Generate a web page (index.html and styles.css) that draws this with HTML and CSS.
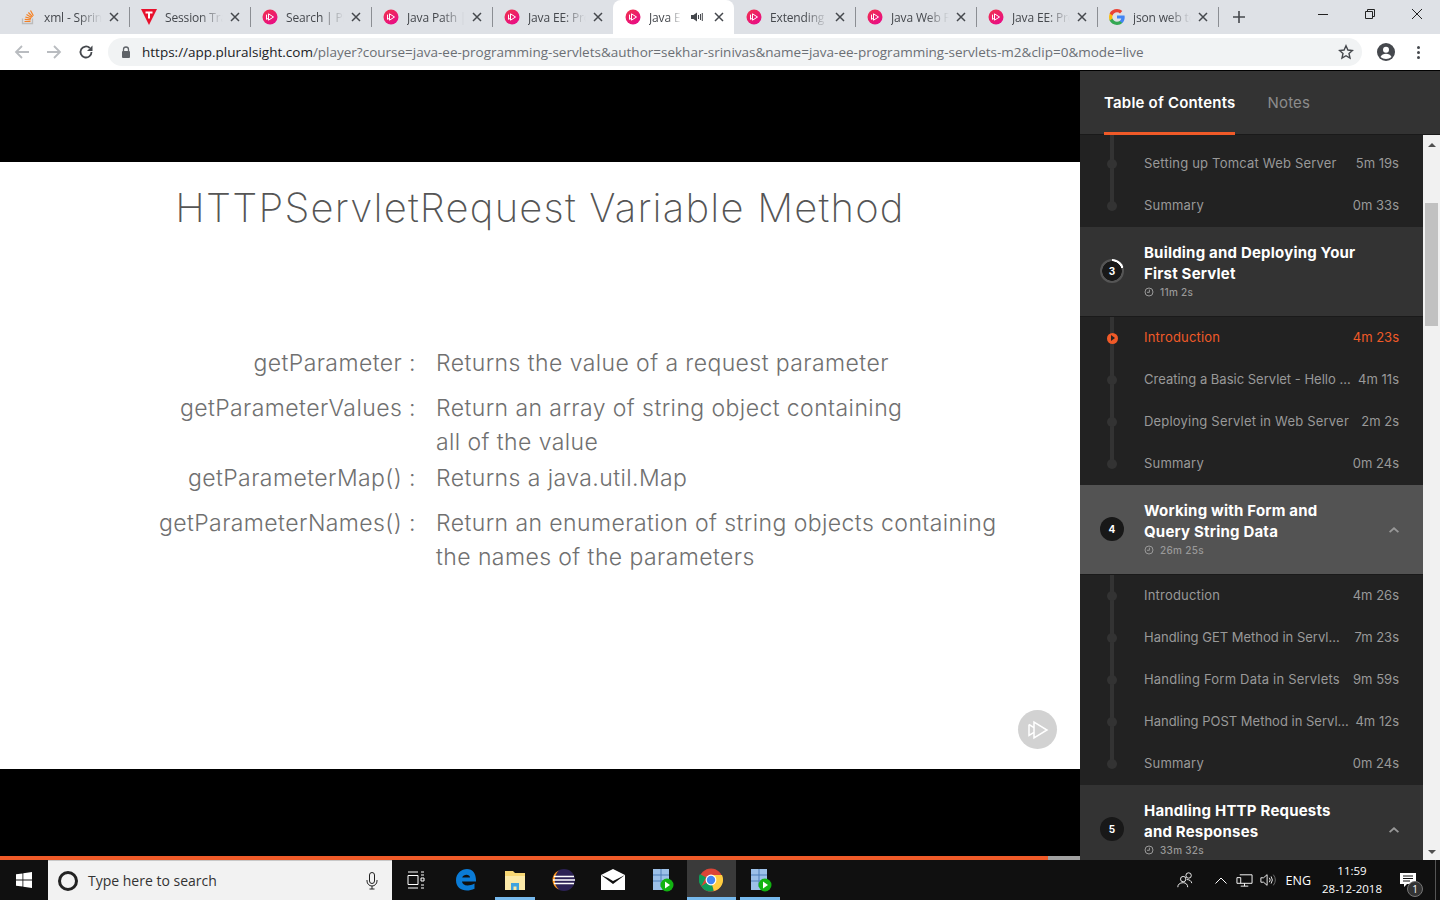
FILE: index.html
```html
<!DOCTYPE html>
<html lang="en">
<head>
    <meta charset="UTF-8">
    <meta name="viewport" content="width=device-width, initial-scale=1.0">
    <title>Java EE: Programming Servlets</title>
    <link rel="stylesheet" href="styles.css">
</head>
<body>

<svg class="defs" width="0" height="0">
    <defs>
        <linearGradient id="psGrad" x1="0.2" y1="0" x2="0.8" y2="1">
            <stop offset="0" stop-color="#f0304f"/>
            <stop offset="1" stop-color="#e80a89"/>
        </linearGradient>
        <symbol id="ps" viewBox="0 0 16 16">
            <circle cx="8" cy="8" r="7.500" fill="url(#psGrad)"/>
            <path d="M6.500 4.800v6.400l5-3.200z" fill="none" stroke="#fff" stroke-width="1"/>
            <path d="M4.500 5.600v4.800l1.600-1" fill="none" stroke="#fff" stroke-width="1"/>
        </symbol>
        <symbol id="close" viewBox="0 0 10 10">
            <path d="M1 1l8 8M9 1l-8 8" stroke="#45484d" stroke-width="1.500" fill="none"/>
        </symbol>
        <symbol id="clock" viewBox="0 0 10 10">
            <circle cx="5" cy="5" r="4" fill="none" stroke="currentColor" stroke-width="1"/>
            <path d="M5.400 2.600v2.700H3" fill="none" stroke="currentColor" stroke-width="1"/>
        </symbol>
        <symbol id="chev" viewBox="0 0 10 6">
            <path d="M5 0l5 4.400-1.200 1.400L5 2.600 1.200 5.800 0 4.400z" fill="currentColor"/>
        </symbol>
        <symbol id="appgrid" viewBox="0 0 24 24">
            <rect x="3" y="1" width="16" height="21" fill="#9cc0e8"/>
            <path d="M3 7h16M3 13h16M11 1v18" stroke="#4f7fb8" stroke-width="1"/>
            <circle cx="17" cy="17" r="6.500" fill="#12b312"/>
            <path d="M15 13.500v7l5-3.500z" fill="#fff"/>
        </symbol>
    </defs>
</svg>

<!-- browser tabs -->
<div class="tabstrip">
    <div class="tab">
        <svg class="tab-icon" viewBox="0 0 16 16"><path d="M2.500 9.500v5h10v-5" fill="none" stroke="#bcbbbb" stroke-width="1.300"/><path d="M4.500 12.500h6M4.700 10.300l6 .6M5.300 8l5.800 1.600M6.500 5.600l5.200 3M8.400 3.500l4.200 4.300M10.500 1.500l2.900 5.300" stroke="#f48024" stroke-width="1.200" fill="none"/></svg>
        <span class="tab-title">xml - Spring</span>
        <svg class="tab-close"><use href="#close"/></svg>
    </div>
    <div class="tab">
        <svg class="tab-icon" viewBox="0 0 16 16"><path d="M0 0h16L8 16z" fill="#e8112d"/><path d="M4.500 2.500h7v2H9v5H7v-5H4.500z" fill="#fff"/></svg>
        <span class="tab-title">Session Tracking</span>
        <svg class="tab-close"><use href="#close"/></svg>
    </div>
    <div class="tab">
        <svg class="tab-icon"><use href="#ps"/></svg>
        <span class="tab-title">Search | Pluralsight</span>
        <svg class="tab-close"><use href="#close"/></svg>
    </div>
    <div class="tab">
        <svg class="tab-icon"><use href="#ps"/></svg>
        <span class="tab-title">Java Path | Pluralsight</span>
        <svg class="tab-close"><use href="#close"/></svg>
    </div>
    <div class="tab no-sep">
        <svg class="tab-icon"><use href="#ps"/></svg>
        <span class="tab-title">Java EE: Programming</span>
        <svg class="tab-close"><use href="#close"/></svg>
    </div>
    <div class="tab active no-sep">
        <svg class="tab-icon"><use href="#ps"/></svg>
        <span class="tab-title short">Java EE: Programming</span>
        <svg class="tab-mute" viewBox="0 0 12 10"><path d="M0 3h2.500L6 .5v9L2.500 7H0z" fill="#45484d"/><path d="M7.500 3v4M9.500 2v6M11.300 1v8" stroke="#45484d" stroke-width="1" fill="none"/></svg>
        <svg class="tab-close"><use href="#close"/></svg>
    </div>
    <div class="tab">
        <svg class="tab-icon"><use href="#ps"/></svg>
        <span class="tab-title">Extending and Using</span>
        <svg class="tab-close"><use href="#close"/></svg>
    </div>
    <div class="tab">
        <svg class="tab-icon"><use href="#ps"/></svg>
        <span class="tab-title">Java Web Fundamentals</span>
        <svg class="tab-close"><use href="#close"/></svg>
    </div>
    <div class="tab">
        <svg class="tab-icon"><use href="#ps"/></svg>
        <span class="tab-title">Java EE: Programming</span>
        <svg class="tab-close"><use href="#close"/></svg>
    </div>
    <div class="tab">
        <svg class="tab-icon" viewBox="0 0 16 16"><path d="M15.700 8.200c0-.6-.1-1.100-.2-1.600H8v3h4.300c-.2 1-.7 1.800-1.600 2.400v2h2.600c1.500-1.400 2.400-3.400 2.400-5.800z" fill="#4285f4"/><path d="M8 16c2.200 0 4-.7 5.300-2l-2.600-2c-.7.500-1.600.8-2.700.8-2.100 0-3.900-1.400-4.500-3.300H.6v2.100C1.900 14.200 4.700 16 8 16z" fill="#34a853"/><path d="M3.500 9.500c-.3-1-.3-2 0-3V4.400H.8c-1 2.200-1 5 0 7.200z" fill="#fbbc05"/><path d="M8 3.200c1.200 0 2.200.4 3 1.200l2.300-2.300C11.900.8 10.100 0 8 0 4.700 0 1.900 1.800.6 4.400l2.900 2.100C4.100 4.600 5.900 3.200 8 3.200z" fill="#ea4335"/></svg>
        <span class="tab-title">json web token</span>
        <svg class="tab-close"><use href="#close"/></svg>
    </div>
    <svg class="new-tab" viewBox="0 0 14 14"><path d="M7 1v12M1 7h12" stroke="#45484d" stroke-width="1.600" fill="none"/></svg>
    <div class="window-btns">
        <svg viewBox="0 0 12 12"><path d="M1 6.500h10" stroke="#222" stroke-width="1" fill="none"/></svg>
        <svg viewBox="0 0 12 12"><path d="M1.500 3.500h7v7h-7zM3.500 3.500v-2h7v7h-2" stroke="#222" stroke-width="1" fill="none"/></svg>
        <svg viewBox="0 0 12 12"><path d="M1 1l10 10M11 1L1 11" stroke="#222" stroke-width="1" fill="none"/></svg>
    </div>
</div>

<!-- address bar -->
<div class="toolbar">
    <svg class="nav-icon" viewBox="0 0 16 16"><path d="M15 8H2M8 2L2 8l6 6" stroke="#b9bcc0" stroke-width="1.800" fill="none"/></svg>
    <svg class="nav-icon" viewBox="0 0 16 16"><path d="M1 8h13M8 2l6 6-6 6" stroke="#b9bcc0" stroke-width="1.800" fill="none"/></svg>
    <svg class="nav-icon" viewBox="0 0 16 16"><path d="M13.500 8A5.500 5.500 0 1 1 11.800 4" stroke="#45484d" stroke-width="1.800" fill="none"/><path d="M14.500 1.500v5.500H9z" fill="#45484d"/></svg>
    <div class="omnibox">
        <svg class="lock" viewBox="0 0 10 13"><path d="M2.500 5.500V3.500a2.500 2.500 0 0 1 5 0v2" stroke="#5f6368" stroke-width="1.300" fill="none"/><rect x="1" y="5" width="8" height="7" rx="1" fill="#5f6368"/></svg>
        <span class="url"><span class="url-host">https://app.pluralsight.com</span>/player?course=java-ee-programming-servlets&amp;author=sekhar-srinivas&amp;name=java-ee-programming-servlets-m2&amp;clip=0&amp;mode=live</span>
        <svg class="star" viewBox="0 0 16 16"><path d="M8 1.800l1.900 4.200 4.500.5-3.400 3 1 4.500L8 11.700 4 14l1-4.500-3.400-3 4.500-.5z" fill="none" stroke="#45484d" stroke-width="1.400"/></svg>
    </div>
    <svg class="avatar" viewBox="0 0 18 18"><circle cx="9" cy="9" r="9" fill="#45484d"/><circle cx="9" cy="6.800" r="3" fill="#fff"/><path d="M3.500 14c1-2.500 3-3.200 5.500-3.200s4.500.7 5.500 3.200c-3 2.600-8 2.600-11 0z" fill="#fff"/></svg>
    <div class="kebab"><i></i><i></i><i></i></div>
</div>

<div class="app">
    <!-- video area -->
    <div class="player">
        <div class="video">
            <div class="slide">
                <h1 class="slide-title">HTTPServletRequest Variable Method</h1>
                <dl class="defs-list">
                    <dt>getParameter :</dt>
                    <dd>Returns the value of a request parameter</dd>
                    <dt class="wide-top">getParameterValues :</dt>
                    <dd class="wide-top">Return an array of string object containing<br>all of the value</dd>
                    <dt class="thin-top">getParameterMap() :</dt>
                    <dd class="thin-top">Returns a java.util.Map</dd>
                    <dt class="wide-top">getParameterNames() :</dt>
                    <dd class="wide-top">Return an enumeration of string objects containing<br>the names of the parameters</dd>
                </dl>
                <div class="watermark">
                    <svg viewBox="0 0 24 24"><path d="M8 4v16l13-8z" fill="none" stroke="#fff" stroke-width="1.500"/><path d="M3 6.500v11l5-3.200" fill="none" stroke="#fff" stroke-width="1.500"/><path d="M3 6.500L8 9.600" fill="none" stroke="#fff" stroke-width="1.500"/></svg>
                </div>
            </div>
        </div>
        <div class="progress"><div class="progress-fill"></div></div>
    </div>

    <!-- table of contents -->
    <div class="sidebar">
        <div class="side-tabs">
            <div class="side-tab current">Table of Contents</div>
            <div class="side-tab">Notes</div>
        </div>
        <div class="side-body">
            <div class="toc">
                <div class="clips first">
                    <div class="clip"><div class="track"><i></i></div><span class="clip-name">Setting up Tomcat Web Server</span><span class="clip-time">5m 19s</span></div>
                    <div class="clip"><div class="track"><i></i></div><span class="clip-name">Summary</span><span class="clip-time">0m 33s</span></div>
                </div>

                <div class="module">
                    <div class="badge progress-ring">3</div>
                    <div class="module-text">
                        <div class="module-title">Building and Deploying Your First Servlet</div>
                        <div class="module-time"><svg><use href="#clock"/></svg>11m 2s</div>
                    </div>
                </div>
                <div class="clips">
                    <div class="clip playing"><div class="track"><i></i></div><span class="clip-name">Introduction</span><span class="clip-time">4m 23s</span></div>
                    <div class="clip"><div class="track"><i></i></div><span class="clip-name tight">Creating a Basic Servlet - Hello ...</span><span class="clip-time">4m 11s</span></div>
                    <div class="clip"><div class="track"><i></i></div><span class="clip-name">Deploying Servlet in Web Server</span><span class="clip-time">2m 2s</span></div>
                    <div class="clip"><div class="track"><i></i></div><span class="clip-name">Summary</span><span class="clip-time">0m 24s</span></div>
                </div>

                <div class="module lit">
                    <div class="badge">4</div>
                    <div class="module-text">
                        <div class="module-title">Working with Form and Query String Data</div>
                        <div class="module-time"><svg><use href="#clock"/></svg>26m 25s</div>
                    </div>
                    <svg class="chev"><use href="#chev"/></svg>
                </div>
                <div class="clips">
                    <div class="clip"><div class="track"><i></i></div><span class="clip-name">Introduction</span><span class="clip-time">4m 26s</span></div>
                    <div class="clip"><div class="track"><i></i></div><span class="clip-name tight">Handling GET Method in Servl...</span><span class="clip-time">7m 23s</span></div>
                    <div class="clip"><div class="track"><i></i></div><span class="clip-name">Handling Form Data in Servlets</span><span class="clip-time">9m 59s</span></div>
                    <div class="clip"><div class="track"><i></i></div><span class="clip-name tight">Handling POST Method in Servl...</span><span class="clip-time">4m 12s</span></div>
                    <div class="clip"><div class="track"><i></i></div><span class="clip-name">Summary</span><span class="clip-time">0m 24s</span></div>
                </div>

                <div class="module">
                    <div class="badge">5</div>
                    <div class="module-text">
                        <div class="module-title">Handling HTTP Requests and Responses</div>
                        <div class="module-time"><svg><use href="#clock"/></svg>33m 32s</div>
                    </div>
                    <svg class="chev"><use href="#chev"/></svg>
                </div>
            </div>
            <div class="scrollbar">
                <div class="arrow-up"></div>
                <div class="thumb"></div>
                <div class="arrow-down"></div>
            </div>
        </div>
    </div>
</div>

<!-- windows taskbar -->
<div class="taskbar">
    <div class="start">
        <svg viewBox="0 0 16 16"><path d="M0 2.300l6.500-.9v6.200H0zM7.300 1.300L16 0v7.600H7.300zM0 8.400h6.500v6.200L0 13.700zM7.300 8.400H16V16l-8.700-1.300z" fill="#fff"/></svg>
    </div>
    <div class="search">
        <span class="cortana"></span>
        <span class="search-text">Type here to search</span>
        <svg class="mic" viewBox="0 0 12 18"><rect x="3.500" y=".5" width="5" height="11" rx="2.500" fill="none" stroke="#222"/><path d="M1 8v1a5 5 0 0 0 10 0V8M6 14v3M3.500 17h5" fill="none" stroke="#222"/></svg>
    </div>
    <div class="task-icons">
        <div class="task"><svg class="ico-task" viewBox="0 0 18 18"><path d="M1 1h10M1 17h10M1 4.500h10v9H1zM14 1h3M14 4h3M14 7h3v3h-3zM14 14h3M14 17h3" fill="none" stroke="#fff"/></svg></div>
        <div class="task gap"><svg class="ico" viewBox="0 0 24 24"><path d="M22 13.500H8c.2 3.800 5.800 5.600 12.500 2v5.200c-8.500 4-18.500 1.300-18.500-8.400C2 5.300 7.500 1 13 1c5.800 0 9.300 4.500 9 12.500zM8.200 9.500H16c0-3.500-6.500-4-7.800 0z" fill="#0a7bd6" fill-rule="evenodd"/></svg></div>
        <div class="task open"><svg class="ico" viewBox="0 0 24 24"><path d="M2 3h8l2 2h10v17H2z" fill="#f7d774"/><path d="M2 8h20v14H2z" fill="#fbe9a8"/><path d="M8 22v-7h8v7h-2.500v-3.500h-3V22z" fill="#3fa3e0"/></svg></div>
        <div class="task"><svg class="ico" viewBox="0 0 24 24"><circle cx="12" cy="12" r="11" fill="#2c2255"/><path d="M7 2.500C2.500 6 .5 16 7 21.500 3 20 .5 16 .5 12S3 4 7 2.500z" fill="#f7941e"/><path d="M2 8.500h20M1 12h22M2 15.500h20" stroke="#fff" stroke-width="1.700"/></svg></div>
        <div class="task"><svg class="ico" viewBox="0 0 24 24"><path d="M0 7l12-6 12 6v15H0z" fill="#fff"/><path d="M0 7l12 9 12-9-2 1-10 5-5-3 12 9H19L7 10z" fill="#101010"/></svg></div>
        <div class="task"><svg class="ico"><use href="#appgrid"/></svg></div>
        <div class="task open current"><svg class="ico" viewBox="0 0 24 24"><circle cx="12" cy="12" r="11.500" fill="#db4437"/><path d="M12 12L2.200 18.200A11.500 11.500 0 0 0 12 23.500c1 0 2-.1 2.800-.4z" fill="#0f9d58"/><path d="M12 12l2.800 11.100A11.500 11.500 0 0 0 23 7H12z" fill="#ffcd40"/><path d="M2.200 18.200L7 9.500 1 6A11.500 11.500 0 0 0 2.200 18.200z" fill="#0f9d58"/><circle cx="12" cy="12" r="5.400" fill="#fff"/><circle cx="12" cy="12" r="4.200" fill="#4285f4"/></svg></div>
        <div class="task open"><svg class="ico"><use href="#appgrid"/></svg></div>
    </div>
    <div class="tray">
        <svg class="tray-people" viewBox="0 0 20 20"><circle cx="8" cy="9" r="3" fill="none" stroke="#fff"/><circle cx="14" cy="5" r="3" fill="none" stroke="#fff"/><path d="M2 18c0-3 2-5 6-5 3 0 5 2 5 5M12 9.500c3 0 5 1.500 5.500 4" fill="none" stroke="#fff"/></svg>
        <svg class="tray-caret" viewBox="0 0 12 7"><path d="M.5 6.500L6 1l5.500 5.500" fill="none" stroke="#fff"/></svg>
        <svg class="tray-net" viewBox="0 0 18 14"><path d="M4 1.500h13v9H1V4.500h4v6M9 10.500v3M5 13.500h8" fill="none" stroke="#fff"/></svg>
        <svg class="tray-vol" viewBox="0 0 18 14"><path d="M1 4.500h3L8 1v12L4 9.500H1z" fill="none" stroke="#fff"/><path d="M10.500 4.500a4 4 0 0 1 0 5M12.500 3a7 7 0 0 1 0 8" fill="none" stroke="#fff"/><path d="M15 1a10 10 0 0 1 0 12" fill="none" stroke="#777"/></svg>
        <span class="lang">ENG</span>
        <div class="clock"><span>11:59</span><span>28-12-2018</span></div>
        <div class="notify">
            <svg viewBox="0 0 16 15"><path d="M0 0h16v11H7l-3 3v-3H0z" fill="#fff"/><path d="M3 3h10M3 5.500h10M3 8h7" stroke="#101010"/></svg>
            <span class="notify-count">1</span>
        </div>
        <div class="show-desktop"></div>
    </div>
</div>

</body>
</html>
```

FILE: styles.css
```css
* {
    box-sizing: border-box;
}
html, body {
    margin: 0;
    height: 900px;
    overflow: hidden;
}
body {
    font-family: "Open Sans", Arial, sans-serif;
    display: flex;
    flex-direction: column;
    background-color: #000;
}
.defs {
    position: absolute;
}

/* tabs */
.tabstrip {
    height: 34px;
    padding-left: 8px;
    display: flex;
    align-items: center;
    background-color: #dee1e6;
    flex-shrink: 0;
}
.tab {
    width: 121px;
    height: 34px;
    padding-left: 12px;
    display: flex;
    align-items: center;
    position: relative;
    flex-shrink: 0;
}
.tab::after {
    content: "";
    position: absolute;
    right: -1px;
    top: 7px;
    width: 1px;
    height: 20px;
    background-color: #8b8e93;
}
.tab.no-sep::after {
    display: none;
}
.tab.active {
    background-color: #fff;
    border-radius: 8px 8px 0 0;
}
.tab-icon {
    width: 16px;
    height: 16px;
    flex-shrink: 0;
}
.tab-title {
    margin-left: 8px;
    width: 58px;
    font-size: 12px;
    letter-spacing: -0.150px;
    color: #45484d;
    white-space: nowrap;
    overflow: hidden;
    -webkit-mask-image: linear-gradient(to right, #000 60%, transparent 100%);
    mask-image: linear-gradient(to right, #000 60%, transparent 100%);
}
.tab-title.short {
    width: 32px;
}
.tab-mute {
    width: 12px;
    height: 10px;
    margin-left: 10px;
    flex-shrink: 0;
}
.tab-close {
    width: 10px;
    height: 10px;
    margin-left: 7px;
    flex-shrink: 0;
}
.tab-mute + .tab-close {
    margin-left: 11px;
}
.new-tab {
    width: 14px;
    height: 14px;
    margin-left: 14px;
}
.window-btns {
    margin-left: auto;
    display: flex;
    gap: 35px;
    padding-right: 17px;
    margin-top: -6px;
}
.window-btns svg {
    width: 12px;
    height: 12px;
}

/* address bar */
.toolbar {
    height: 36px;
    display: flex;
    align-items: center;
    padding: 0 0 0 14px;
    background-color: #fff;
    flex-shrink: 0;
}
.nav-icon {
    width: 16px;
    height: 16px;
    margin-right: 16px;
    flex-shrink: 0;
}
.omnibox {
    width: 1254px;
    height: 28px;
    margin-left: -2px;
    border-radius: 14px;
    background-color: #f1f3f4;
    display: flex;
    align-items: center;
    padding: 0 8px 0 13px;
}
.lock {
    width: 10px;
    height: 13px;
    flex-shrink: 0;
}
.url {
    margin-left: 11px;
    font-size: 13.500px;
    color: #6b6f74;
    white-space: nowrap;
}
.url-host {
    color: #202124;
}
.star {
    width: 16px;
    height: 16px;
    margin-left: auto;
}
.avatar {
    width: 18px;
    height: 18px;
    margin-left: 15px;
}
.kebab {
    margin-left: 22px;
    display: flex;
    flex-direction: column;
    gap: 2px;
}
.kebab i {
    width: 3px;
    height: 3px;
    border-radius: 50%;
    background-color: #45484d;
}

/* player */
.app {
    height: 790px;
    display: flex;
    border-top: 1px solid #000;
    flex-shrink: 0;
}
.player {
    width: 1080px;
    display: flex;
    flex-direction: column;
}
.video {
    flex: 1;
    padding-top: 91px;
    background-color: #000;
}
.slide {
    height: 607px;
    padding-top: 19px;
    background-color: #fff;
    color: #707070;
    font-family: Inter, "Open Sans", sans-serif;
    font-weight: 300;
    position: relative;
}
.slide-title {
    margin: 0;
    text-align: center;
    font-size: 40px;
    line-height: 54px;
    font-weight: 200;
    color: #555;
    letter-spacing: 1.200px;
}
.defs-list {
    margin: 111px 0 0;
    display: grid;
    grid-template-columns: 416px 1fr;
    column-gap: 20px;
    font-size: 23px;
    line-height: 34px;
    letter-spacing: 0.420px;
}
.defs-list dt {
    text-align: right;
}
.defs-list dd {
    margin: 0;
}
.wide-top {
    margin-top: 11px !important;
}
.thin-top {
    margin-top: 2px !important;
}
.watermark {
    position: absolute;
    left: 1018px;
    top: 548px;
    width: 39px;
    height: 39px;
    border-radius: 50%;
    background-color: #d2d2d2;
    display: flex;
    align-items: center;
    justify-content: center;
}
.watermark svg {
    width: 24px;
    height: 24px;
}
.progress {
    height: 4px;
    background-color: #a0a0a0;
}
.progress-fill {
    width: 1048px;
    height: 100%;
    background-color: #f05a28;
}

/* sidebar */
.sidebar {
    width: 360px;
    display: flex;
    flex-direction: column;
    background-color: #333;
    font-family: Inter, "Open Sans", sans-serif;
}
.side-tabs {
    height: 64px;
    padding-left: 24px;
    display: flex;
    gap: 32px;
    background-color: #333;
    border-bottom: 1px solid #1a1a1a;
    flex-shrink: 0;
}
.side-tab {
    height: 64px;
    line-height: 64px;
    font-size: 15px;
    letter-spacing: 0.200px;
    color: #8c8c8c;
}
.side-tab.current {
    color: #fff;
    font-weight: 600;
    border-bottom: 3px solid #f05a28;
}
.side-body {
    flex: 1;
    min-height: 0;
    display: flex;
}
.toc {
    width: 343px;
    overflow: hidden;
    background-color: #222;
}
.clips {
    display: flex;
    flex-direction: column;
}
.clips.first {
    padding-top: 8px;
    background: linear-gradient(#333, #333) 30px 0 / 4px 8px no-repeat;
}
.clip {
    height: 42px;
    padding-right: 24px;
    display: flex;
    align-items: center;
    font-size: 13px;
    color: #999;
}
.track {
    width: 64px;
    height: 42px;
    flex-shrink: 0;
    display: flex;
    align-items: center;
    justify-content: center;
    background: linear-gradient(#333, #333) center / 4px 100% no-repeat;
}
.clip:last-child .track {
    background-size: 4px 50%;
    background-position: top;
}
.track i {
    width: 10px;
    height: 10px;
    border-radius: 50%;
    background-color: #333;
}
.clip-name {
    flex: 1;
    min-width: 0;
    margin-bottom: 2px;
    white-space: nowrap;
    letter-spacing: 0.200px;
}
.clip-name.tight {
    letter-spacing: 0;
}
.clip-time {
    margin-left: 8px;
    margin-bottom: 2px;
    flex-shrink: 0;
}
.clip.playing {
    color: #f05a28;
}
.clip.playing .track i {
    width: 11px;
    height: 11px;
    background-color: #f05a28;
    display: flex;
    align-items: center;
    justify-content: center;
}
.clip.playing .track i::after {
    content: "";
    margin-left: 1px;
    border: 3px solid transparent;
    border-right: 0;
    border-left: 4px solid #222;
}
.module {
    height: 90px;
    padding: 0 24px 4px 0;
    display: flex;
    align-items: center;
    background-color: #333;
    border-bottom: 1px solid #1a1a1a;
    color: #fff;
}
.module.lit {
    background-color: #535353;
}
.badge {
    width: 24px;
    height: 24px;
    margin: 2px 20px 0;
    flex-shrink: 0;
    border-radius: 50%;
    background-color: #181818;
    color: #fff;
    font-size: 10px;
    font-weight: 700;
    line-height: 24px;
    text-align: center;
}
.progress-ring {
    background: radial-gradient(circle, #181818 0 9.500px, transparent 10px), conic-gradient(#fff 0 20%, #555 20%);
}
.module-text {
    flex: 1;
    min-width: 0;
}
.module-title {
    width: 215px;
    font-size: 15px;
    font-weight: 700;
    line-height: 21px;
    letter-spacing: 0.200px;
}
.module-time {
    margin-top: 2px;
    display: flex;
    align-items: center;
    gap: 6px;
    font-size: 10px;
    font-weight: 500;
    letter-spacing: 0.300px;
    color: #999;
}
.module-time svg {
    width: 10px;
    height: 10px;
}
.chev {
    width: 10px;
    height: 6px;
    margin-top: 4px;
    color: #999;
}
.scrollbar {
    width: 17px;
    padding-top: 8px;
    display: flex;
    flex-direction: column;
    align-items: center;
    background-color: #f1f1f1;
    flex-shrink: 0;
}
.arrow-up {
    border: 4px solid transparent;
    border-top: 0;
    border-bottom: 4px solid #505050;
}
.thumb {
    width: 13px;
    height: 123px;
    margin-top: 56px;
    background-color: #c1c1c1;
}
.arrow-down {
    margin-top: auto;
    margin-bottom: 6px;
    border: 4px solid transparent;
    border-bottom: 0;
    border-top: 4px solid #505050;
}

/* taskbar */
.taskbar {
    height: 40px;
    display: flex;
    background-color: #101010;
    flex-shrink: 0;
}
.start {
    width: 48px;
    display: flex;
    align-items: center;
    justify-content: center;
}
.start svg {
    width: 16px;
    height: 16px;
}
.search {
    width: 344px;
    padding: 0 14px 0 10px;
    display: flex;
    align-items: center;
    background-color: #f2f2f2;
    border-top: 1px solid #c8c8c8;
}
.cortana {
    width: 20px;
    height: 20px;
    border: 3px solid #222;
    border-radius: 50%;
    flex-shrink: 0;
}
.search-text {
    margin-left: 10px;
    font-size: 14px;
    color: #333;
}
.mic {
    width: 12px;
    height: 18px;
    margin-left: auto;
}
.task-icons {
    display: flex;
}
.task {
    width: 49px;
    display: flex;
    align-items: center;
    justify-content: center;
}
.task:first-child {
    width: 48px;
}
.task.gap {
    margin-left: 1.500px;
}
.task.open {
    background: linear-gradient(#76b9ed, #76b9ed) center bottom / 40px 3px no-repeat;
}
.task.current {
    background: linear-gradient(#76b9ed, #76b9ed) center bottom / 100% 3px no-repeat, #3a3a3a;
}
.ico {
    width: 24px;
    height: 24px;
}
.ico-task {
    width: 18px;
    height: 18px;
}
.tray {
    margin-left: auto;
    display: flex;
    align-items: center;
    color: #fff;
}
.tray-people {
    width: 18px;
    height: 18px;
}
.tray-caret {
    width: 12px;
    height: 7px;
    margin-left: 21px;
}
.tray-net {
    width: 17px;
    height: 14px;
    margin-left: 9px;
}
.tray-vol {
    width: 16px;
    height: 14px;
    margin-left: 7px;
}
.lang {
    margin-left: 10px;
    font-size: 12.500px;
}
.clock {
    width: 72px;
    margin-left: 5px;
    display: flex;
    flex-direction: column;
    align-items: center;
    font-size: 11.500px;
    line-height: 18px;
}
.notify {
    width: 32px;
    margin-left: 4px;
    position: relative;
    display: flex;
    justify-content: center;
}
.notify svg {
    width: 16px;
    height: 15px;
}
.notify-count {
    position: absolute;
    left: 15px;
    top: 8px;
    width: 16px;
    height: 16px;
    border: 1px solid #777;
    border-radius: 50%;
    background-color: #333;
    font-size: 10px;
    line-height: 14px;
    text-align: center;
}
.show-desktop {
    width: 1px;
    height: 40px;
    margin-left: 11px;
    margin-right: 4px;
    background-color: #555;
}
```
